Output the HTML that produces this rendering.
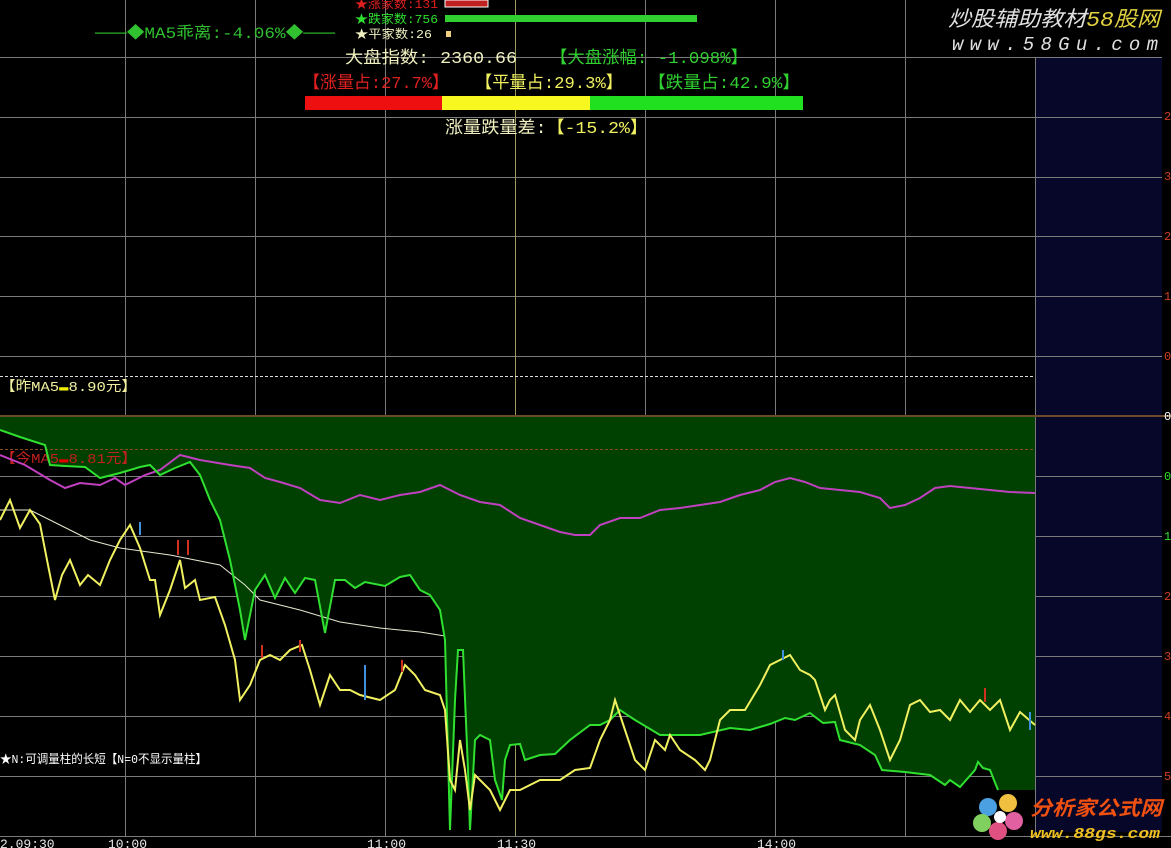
<!DOCTYPE html>
<html><head><meta charset="utf-8"><style>
html,body{margin:0;padding:0;background:#000;width:1171px;height:848px;overflow:hidden}
svg{display:block}
text{font-family:"Liberation Mono","WenQuanYi Zen Hei","Noto Sans CJK SC",monospace}
</style></head><body>
<svg width="1171" height="848" viewBox="0 0 1171 848" xmlns="http://www.w3.org/2000/svg">
<rect width="1171" height="848" fill="#000"/>
<rect x="1036" y="57" width="126" height="775" fill="#07072a"/>
<g stroke="#7a7a7a" stroke-width="1">
<line x1="0" y1="57.5" x2="1162" y2="57.5"/>
<line x1="0" y1="117.5" x2="1162" y2="117.5"/>
<line x1="0" y1="177.5" x2="1162" y2="177.5"/>
<line x1="0" y1="236.5" x2="1162" y2="236.5"/>
<line x1="0" y1="296.5" x2="1162" y2="296.5"/>
<line x1="0" y1="356.5" x2="1162" y2="356.5"/>
<line x1="125.5" y1="0" x2="125.5" y2="836"/>
<line x1="255.5" y1="0" x2="255.5" y2="836"/>
<line x1="385.5" y1="0" x2="385.5" y2="836"/>
<line x1="645.5" y1="0" x2="645.5" y2="836"/>
<line x1="775.5" y1="0" x2="775.5" y2="836"/>
<line x1="905.5" y1="0" x2="905.5" y2="836"/>
<line x1="1035.5" y1="57" x2="1035.5" y2="836"/>
<line x1="0" y1="476.5" x2="1162" y2="476.5"/>
<line x1="0" y1="536.5" x2="1162" y2="536.5"/>
<line x1="0" y1="596.5" x2="1162" y2="596.5"/>
<line x1="0" y1="656.5" x2="1162" y2="656.5"/>
<line x1="0" y1="716.5" x2="1162" y2="716.5"/>
<line x1="0" y1="776.5" x2="1162" y2="776.5"/>
<line x1="0" y1="836.5" x2="1171" y2="836.5"/>
</g>
<line x1="515.5" y1="0" x2="515.5" y2="836" stroke="#9a9a60"/>
<line x1="0" y1="376.5" x2="1035" y2="376.5" stroke="#ddd" stroke-dasharray="3,2"/>
<line x1="0" y1="416" x2="1171" y2="416" stroke="#6b4a28" stroke-width="2"/>
<polygon fill="#004000" points="0,417 1035,417 1035,790 998,790 990,770 983,768 978,762 975,770 960,787 950,780 945,785 930,775 905,772 882,770 875,755 860,745 840,740 835,722 823,723 810,713 795,720 785,718 770,724 750,730 730,728 700,735 660,735 635,720 620,710 610,720 600,725 590,725 570,740 555,754 540,755 525,760 520,744 510,745 505,760 502,800 495,780 490,740 480,735 475,740 470,830 468,770 463,650 458,650 455,700 450,830 445,640 440,610 430,595 420,590 410,575 400,577 385,586 365,582 355,588 345,580 335,580 325,633 315,580 305,578 295,593 285,578 275,598 265,575 255,590 245,640 240,610 230,560 220,520 210,500 200,475 190,462 175,468 160,475 150,465 140,467 120,473 100,478 85,467 65,466 50,465 45,445 20,437 0,430"/>
<line x1="0" y1="449.5" x2="1035" y2="449.5" stroke="#8a4a20" stroke-dasharray="3,2"/>
<text x="0" y="463" font-size="14" fill="#c02020" textLength="137" lengthAdjust="spacingAndGlyphs">【今MA5<tspan fill="#e00000">▬</tspan>8.81元】</text>
<polyline fill="none" stroke="#c040c0" stroke-width="2" points="0,455 25,465 50,480 65,488 80,483 100,485 115,478 125,485 145,475 160,470 180,455 200,460 230,465 250,468 265,478 280,482 300,488 320,500 340,503 360,495 380,500 400,495 420,492 440,485 460,495 480,502 500,505 520,518 540,525 560,532 575,535 590,535 600,525 620,518 640,518 660,510 680,508 700,505 720,502 740,495 760,490 775,482 790,478 805,482 820,488 840,490 860,492 880,498 890,508 905,505 920,498 935,488 950,486 970,488 990,490 1010,492 1035,493"/>
<polyline fill="none" stroke="#e8e8d0" stroke-width="1" points="0,510 30,510 50,520 70,530 90,540 120,548 170,555 220,565 245,585 260,600 300,610 340,622 380,628 420,632 445,636"/>
<polyline fill="none" stroke="#30e030" stroke-width="2" points="0,430 20,437 45,445 50,465 65,466 85,467 100,478 120,473 140,467 150,465 160,475 175,468 190,462 200,475 210,500 220,520 230,560 240,610 245,640 255,590 265,575 275,598 285,578 295,593 305,578 315,580 325,633 335,580 345,580 355,588 365,582 385,586 400,577 410,575 420,590 430,595 440,610 445,640 450,830 455,700 458,650 463,650 468,770 470,830 475,740 480,735 490,740 495,780 502,800 505,760 510,745 520,744 525,760 540,755 555,754 570,740 590,725 600,725 610,720 620,710 635,720 660,735 700,735 730,728 750,730 770,724 785,718 795,720 810,713 823,723 835,722 840,740 860,745 875,755 882,770 905,772 930,775 945,785 950,780 960,787 975,770 978,762 983,768 990,770 998,790"/>
<polyline fill="none" stroke="#f0f060" stroke-width="2" points="0,520 10,500 20,528 30,510 40,524 47,560 55,600 62,575 70,560 80,585 88,575 100,585 110,560 120,540 130,525 140,548 150,580 155,580 160,615 170,590 180,560 185,588 195,580 200,600 215,597 225,625 235,660 240,700 250,685 260,660 270,655 280,660 290,650 302,645 310,670 320,705 330,675 340,690 350,690 360,695 380,700 395,690 405,665 415,675 425,690 440,695 445,710 450,780 455,790 460,740 465,770 470,810 475,775 480,780 490,790 500,810 510,790 520,790 540,780 560,780 575,770 590,768 600,740 610,720 615,700 625,730 635,760 645,770 655,740 665,750 670,735 680,750 695,760 705,770 710,760 720,720 730,710 745,710 760,685 770,665 780,660 790,655 800,670 810,675 815,680 825,710 830,700 835,695 845,730 855,740 860,720 870,705 880,730 890,760 900,740 910,705 920,700 930,712 940,710 950,720 960,700 970,712 980,700 990,710 1000,700 1010,730 1020,712 1035,725"/>
<g stroke="#d03020" stroke-width="2"><line x1="178" y1="540" x2="178" y2="555"/><line x1="188" y1="540" x2="188" y2="555"/><line x1="262" y1="645" x2="262" y2="658"/><line x1="300" y1="640" x2="300" y2="652"/><line x1="402" y1="660" x2="402" y2="672"/><line x1="985" y1="688" x2="985" y2="702"/></g>
<g stroke="#4090e0" stroke-width="2"><line x1="365" y1="665" x2="365" y2="700"/><line x1="140" y1="522" x2="140" y2="535"/><line x1="783" y1="650" x2="783" y2="660"/><line x1="1030" y1="712" x2="1030" y2="730"/></g>
<text x="0" y="763" font-size="12" fill="#fff" textLength="207" lengthAdjust="spacingAndGlyphs">★N:可调量柱的长短【N=0不显示量柱】</text>
<text x="0" y="391" font-size="14" fill="#f0f0a0" textLength="137" lengthAdjust="spacingAndGlyphs">【昨MA5<tspan fill="#f0f000">▬</tspan>8.90元】</text>
<g font-size="13" fill="#e8e8e8"><text x="0" y="848">2.09:30</text><text x="108" y="848">10:00</text><text x="367" y="848">11:00</text><text x="497" y="848">11:30</text><text x="757" y="848">14:00</text></g>
<g font-size="12" fill="#d04020"><text x="1164" y="120">2</text><text x="1164" y="180">3</text><text x="1164" y="240">2</text><text x="1164" y="300">1</text><text x="1164" y="360">0</text><text x="1164" y="420" fill="#fff">0</text><text x="1164" y="480" fill="#30e030">0</text><text x="1164" y="540" fill="#30e030">1</text><text x="1164" y="600">2</text><text x="1164" y="660">3</text><text x="1164" y="720">4</text><text x="1164" y="780">5</text></g>
<text x="355" y="8" font-size="12" fill="#e02020" textLength="83" lengthAdjust="spacingAndGlyphs">★涨家数:131</text>
<rect x="445" y="0" width="43" height="7" fill="#c02020" stroke="#fff" stroke-width="1"/>
<text x="355" y="23" font-size="12" fill="#30e030" textLength="83" lengthAdjust="spacingAndGlyphs">★跌家数:756</text>
<rect x="445" y="15" width="252" height="7" fill="#30d030"/>
<text x="355" y="38" font-size="12" fill="#f0f0c0" textLength="77" lengthAdjust="spacingAndGlyphs">★平家数:26</text>
<rect x="446" y="31" width="5" height="6" fill="#f0d080"/>
<text x="95" y="38" font-size="16" fill="#30c030" textLength="240" lengthAdjust="spacingAndGlyphs">───◆MA5乖离:-4.06%◆───</text>
<text x="345" y="63" font-size="17" fill="#f0f0c0" textLength="172" lengthAdjust="spacingAndGlyphs">大盘指数: 2360.66</text>
<text x="550" y="63" font-size="17" fill="#30d030" textLength="198" lengthAdjust="spacingAndGlyphs">【大盘涨幅: -1.098%】</text>
<text x="303" y="88" font-size="17" fill="#e02020" textLength="146" lengthAdjust="spacingAndGlyphs">【涨量占:27.7%】</text>
<text x="475" y="88" font-size="17" fill="#f0f060" textLength="148" lengthAdjust="spacingAndGlyphs">【平量占:29.3%】</text>
<text x="648" y="88" font-size="17" fill="#30d030" textLength="152" lengthAdjust="spacingAndGlyphs">【跌量占:42.9%】</text>
<rect x="305" y="96" width="137" height="14" fill="#ee1010"/>
<rect x="442" y="96" width="148" height="14" fill="#f8f820"/>
<rect x="590" y="96" width="213" height="14" fill="#20e020"/>
<text x="445" y="133" font-size="17" fill="#f0f0c0" textLength="203" lengthAdjust="spacingAndGlyphs">涨量跌量差:<tspan fill="#f0f060">【-15.2%】</tspan></text>
<rect x="944" y="0" width="227" height="56" fill="#000"/>
<text x="948" y="26" font-size="21" font-style="italic" fill="#e0e0e0" textLength="212" lengthAdjust="spacingAndGlyphs">炒股辅助教材<tspan fill="#e0d040">58股网</tspan></text>
<text x="952" y="50" font-size="19" font-style="italic" fill="#e0e0e0" textLength="206" lengthAdjust="spacing">www.58Gu.com</text>
<g transform="translate(1000,815)">
<circle cx="-12" cy="-8" r="9" fill="#4aa0e0"/><circle cx="8" cy="-12" r="9" fill="#f0c040"/><circle cx="14" cy="6" r="9" fill="#e060a0"/><circle cx="-2" cy="16" r="9" fill="#e05080"/><circle cx="-18" cy="8" r="9" fill="#80d060"/><circle cx="0" cy="2" r="6" fill="#fff"/>
</g>
<text x="1030" y="815" font-size="20" font-weight="bold" font-style="italic" fill="#f05010" textLength="132" lengthAdjust="spacingAndGlyphs">分析家公式网</text>
<text x="1030" y="838" font-size="15" font-weight="bold" font-style="italic" fill="#f0c020" textLength="130" lengthAdjust="spacingAndGlyphs">www.88gs.com</text>
</svg>
</body></html>
